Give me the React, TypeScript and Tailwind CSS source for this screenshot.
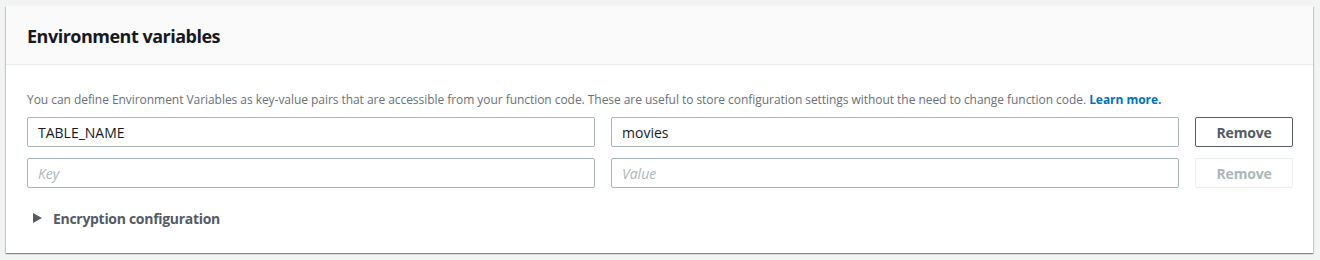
import React from "react";

export default function App() {
  const font = { fontFamily: "'Open Sans', Roboto, Arial, sans-serif" };
  return (
    <div className="w-[1320px] h-[260px] bg-[#f2f3f3] pt-[6px] pl-[6px]" style={font}>
      <div className="w-[1307px] h-[247px] bg-white shadow-[0_1px_1px_0_rgba(0,28,36,0.3),1px_1px_1px_0_rgba(0,28,36,0.15),-1px_1px_1px_0_rgba(0,28,36,0.15)] flex flex-col">
        <div className="h-[59px] bg-[#fafafa] border-b border-[#eaeded] flex items-center pl-[21px] pt-[2px]">
          <h2 className="text-[18px] font-bold tracking-[-0.5px] text-[#16191f] leading-[22px]">Environment variables</h2>
        </div>
        <div className="pl-[21px] pr-[20px] pt-[27px]">
          <p className="text-[12px] leading-[16px] tracking-[-0.05px] text-[#687078]">
            You can define Environment Variables as key-value pairs that are accessible from your function code. These are useful to store configuration settings without the need to change function code.{" "}
            <a className="font-bold text-[#0073bb]">Learn more.</a>
          </p>
          <div className="mt-[9px] grid grid-cols-[1fr_1fr_98px] gap-x-4 gap-y-[11px]">
            <div className="h-[30px] border border-[#aab7b8] rounded-[2px] flex items-center px-[10px] text-[14px] text-[#16191f]">TABLE_NAME</div>
            <div className="h-[30px] border border-[#aab7b8] rounded-[2px] flex items-center px-[10px] text-[14px] text-[#16191f]">movies</div>
            <button className="h-[30px] border border-[#545b64] rounded-[2px] text-[14px] font-bold tracking-[-0.2px] text-[#545b64] bg-white">Remove</button>
            <div className="h-[30px] border border-[#aab7b8] rounded-[2px] flex items-center px-[10px] text-[14px] italic text-[#aab7b8]">Key</div>
            <div className="h-[30px] border border-[#aab7b8] rounded-[2px] flex items-center px-[10px] text-[14px] italic text-[#aab7b8]">Value</div>
            <button className="h-[30px] border border-[#eaeded] rounded-[2px] text-[14px] font-bold tracking-[-0.2px] text-[#aab7b8] bg-white">Remove</button>
          </div>
          <div className="mt-[20px] h-[20px] flex items-center pl-[6px] gap-[11px] text-[14px] font-bold tracking-[-0.3px] text-[#545b64]">
            <svg width="9" height="10" viewBox="0 0 9 10"><path d="M0 0 L9 5 L0 10 Z" fill="#545b64" /></svg>
            <span>Encryption configuration</span>
          </div>
        </div>
      </div>
    </div>
  );
}
